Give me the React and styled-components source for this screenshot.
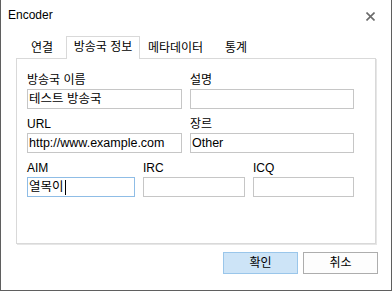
import styled, { createGlobalStyle } from 'styled-components';

const GlobalStyle = createGlobalStyle`
  html, body {
    margin: 0;
    padding: 0;
    background: #ffffff;
  }
  body {
    font-family: 'Liberation Sans', 'Noto Sans CJK KR', sans-serif;
    font-size: 12px;
    color: #000000;
  }
`;

const SWindow = styled.div`
  box-sizing: border-box;
  width: 392px;
  height: 291px;
  border: 1px solid #5f5f5f;
  border-top: none;
  background: #ffffff;
  display: flex;
  flex-direction: column;
`;

const STitleBar = styled.div`
  height: 36px;
  display: flex;
  align-items: flex-start;
  justify-content: space-between;
  padding: 7px 0 0 7px;
  box-sizing: border-box;
  line-height: 16px;
`;

const SClose = styled.div`
  width: 12px;
  height: 12px;
  margin: 3px 15px 0 0;
  display: flex;
  align-items: center;
  justify-content: center;
`;

const STabBar = styled.div`
  display: flex;
  align-items: flex-end;
  height: 23px;
  margin-left: 17px;
`;

const STab = styled.div`
  box-sizing: border-box;
  width: ${(p) => p.$w}px;
  text-align: center;
  white-space: nowrap;
  line-height: 20px;
  ${(p) =>
    p.$active
      ? `
    height: 23px;
    border: 1px solid #d9d9d9;
    border-bottom: none;
    background: #ffffff;
    padding-bottom: 2px;
    position: relative;
    z-index: 1;
  `
      : `
    height: 20px;
    margin-bottom: 1px;
  `}
`;

const SPanel = styled.div`
  box-sizing: border-box;
  width: 360px;
  height: 186px;
  margin: -1px 0 0 15px;
  border: 1px solid #d9d9d9;
  box-shadow: 1px 1px 0 #e6e6e6;
  padding: 13px 0 0 10px;
  display: flex;
  flex-direction: column;
  gap: 7px;
`;

const SRow = styled.div`
  display: grid;
  grid-template-columns: ${(p) => p.$cols};
  column-gap: 8px;
`;

const SGroup = styled.div`
  display: flex;
  flex-direction: column;
  gap: 1px;
`;

const SLabel = styled.div`
  height: 16px;
  line-height: 16px;
  white-space: nowrap;
`;

const SField = styled.div`
  box-sizing: border-box;
  height: 20px;
  border: 1px solid ${(p) => (p.$focused ? '#8fbde6' : '#c6c6c6')};
  padding-left: 1px;
  font-size: 12.5px;
  line-height: 18px;
  white-space: nowrap;
  overflow: hidden;
  display: flex;
  align-items: center;
`;

const SCaret = styled.span`
  display: inline-block;
  width: 1px;
  height: 15px;
  background: #000000;
  margin-left: 1px;
`;

const SFooter = styled.div`
  display: flex;
  justify-content: flex-end;
  gap: 5px;
  padding: 8px 13px 0 0;
`;

const SButton = styled.div`
  box-sizing: border-box;
  width: 75px;
  height: 22px;
  line-height: 20px;
  text-align: center;
  border: 1px solid ${(p) => (p.$primary ? '#9ac6ea' : '#adadad')};
  background: ${(p) => (p.$primary ? '#cde4f7' : '#fdfdfd')};
`;

function Field({ label, value, focused }) {
  return (
    <SGroup>
      <SLabel>{label}</SLabel>
      <SField $focused={focused}>
        {value}
        {focused && <SCaret />}
      </SField>
    </SGroup>
  );
}

export default function App() {
  return (
    <>
      <GlobalStyle />
      <SWindow>
        <STitleBar>
          <span>Encoder</span>
          <SClose>
            <svg width="9" height="9" viewBox="0 0 9 9">
              <path d="M0.5 0.5 L8.5 8.5 M8.5 0.5 L0.5 8.5" stroke="#6b6b6b" strokeWidth="1.6" />
            </svg>
          </SClose>
        </STitleBar>
        <STabBar>
          <STab $w={48}>연결</STab>
          <STab $w={74} $active>방송국 정보</STab>
          <STab $w={71}>메타데이터</STab>
          <STab $w={50}>통계</STab>
        </STabBar>
        <SPanel>
          <SRow $cols="155px 164px">
            <Field label="방송국 이름" value="테스트 방송국" />
            <Field label="설명" value="" />
          </SRow>
          <SRow $cols="155px 164px">
            <Field label="URL" value="http://www.example.com" />
            <Field label="장르" value="Other" />
          </SRow>
          <SRow $cols="108px 102px 101px">
            <Field label="AIM" value="열목이" focused />
            <Field label="IRC" value="" />
            <Field label="ICQ" value="" />
          </SRow>
        </SPanel>
        <SFooter>
          <SButton $primary>확인</SButton>
          <SButton>취소</SButton>
        </SFooter>
      </SWindow>
    </>
  );
}
